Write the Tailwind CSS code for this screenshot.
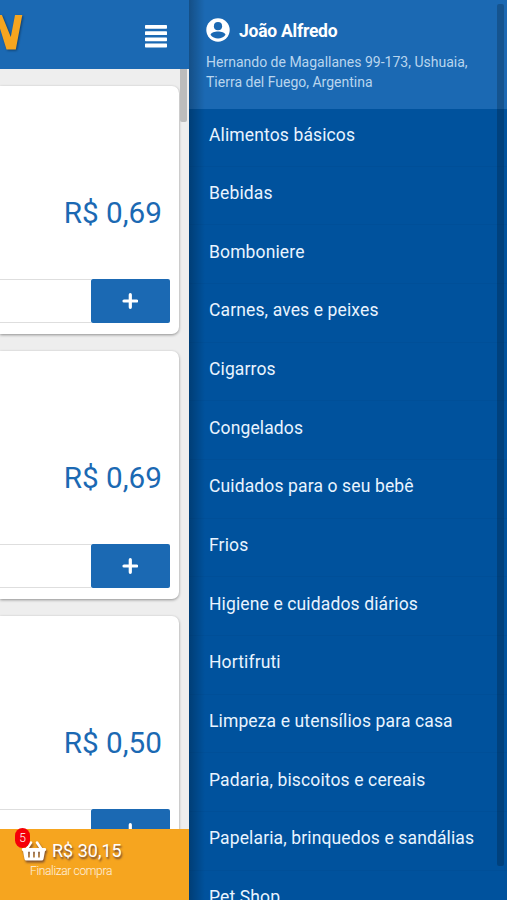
<!DOCTYPE html>
<html lang="pt-BR">
<head>
<meta charset="utf-8">
<title>Loja</title>
<script src="https://cdn.jsdelivr.net/npm/@tailwindcss/browser@4"></script>
</head>
<body class="font-[Roboto,sans-serif]">
<div class="flex h-[900px] w-[507px] overflow-hidden">
  <div class="relative flex h-full w-[189px] shrink-0 flex-col overflow-hidden bg-[#eeeeee]">
    <header class="flex h-[69px] shrink-0 items-center justify-between bg-[#1b69b3] pr-[22px]">
      <svg class="h-[40px] w-[30px]" viewBox="0 0 30 40" style="filter:drop-shadow(1px 1px 1px rgba(0,0,0,.4))"><path fill="#f6a51f" d="M-4 -1L1.500 -1L10.800 22L15.200 -1H22.500L15.800 34.500H6.500L0 13.500L-6 34Z"/></svg>
      <svg class="mt-[3px] h-[24px] w-[22px]" viewBox="0 0 22 24" fill="#fff"><rect y="1" width="22" height="3.800" rx=".7"/><rect y="7.300" width="22" height="3.800" rx=".7"/><rect y="13.500" width="22" height="3.800" rx=".7"/><rect y="19.600" width="22" height="3.800" rx=".7"/></svg>
    </header>
    <main class="flex flex-1 flex-col gap-[17px] overflow-hidden pt-[17.4px] pr-[10px]">
      <section class="flex h-[248px] shrink-0 flex-col rounded-r-[7px] bg-white shadow-[0_1px_3px_rgba(0,0,0,0.4)]">
        <p class="mt-[109px] h-[36px] pr-[17px] text-right text-[29.7px] leading-[36px] text-[#1b69b3]">R$ 0,69</p>
        <div class="mt-[48px] flex h-[44px] pr-[9.5px]"><div class="flex-1 border-y border-[#dedede]"></div><button class="flex w-[78.5px] items-center justify-center rounded-[2px] bg-[#1b69b3]"><svg class="h-4 w-4" viewBox="0 0 16 16" stroke="#fff" stroke-width="3.200" stroke-linecap="round"><path d="M8.300 1.700V14.300M2 8H14.600"/></svg></button></div>
      </section>
      <section class="flex h-[248px] shrink-0 flex-col rounded-r-[7px] bg-white shadow-[0_1px_3px_rgba(0,0,0,0.4)]">
        <p class="mt-[109px] h-[36px] pr-[17px] text-right text-[29.7px] leading-[36px] text-[#1b69b3]">R$ 0,69</p>
        <div class="mt-[48px] flex h-[44px] pr-[9.5px]"><div class="flex-1 border-y border-[#dedede]"></div><button class="flex w-[78.5px] items-center justify-center rounded-[2px] bg-[#1b69b3]"><svg class="h-4 w-4" viewBox="0 0 16 16" stroke="#fff" stroke-width="3.200" stroke-linecap="round"><path d="M8.300 1.700V14.300M2 8H14.600"/></svg></button></div>
      </section>
      <section class="flex h-[248px] shrink-0 flex-col rounded-r-[7px] bg-white shadow-[0_1px_3px_rgba(0,0,0,0.4)]">
        <p class="mt-[109px] h-[36px] pr-[17px] text-right text-[29.7px] leading-[36px] text-[#1b69b3]">R$ 0,50</p>
        <div class="mt-[48px] flex h-[44px] pr-[9.5px]"><div class="flex-1 border-y border-[#dedede]"></div><button class="flex w-[78.5px] items-center justify-center rounded-[2px] bg-[#1b69b3]"><svg class="h-4 w-4" viewBox="0 0 16 16" stroke="#fff" stroke-width="3.200" stroke-linecap="round"><path d="M8.300 1.700V14.300M2 8H14.600"/></svg></button></div>
      </section>
    </main>
    <div class="absolute top-[69px] left-[180px] h-[53px] w-[7px] rounded-b-[2px] bg-[#bcbcbc]"></div>
    <footer class="relative h-[71px] shrink-0 bg-[#f6a51f] pt-[9px] pl-[21px] text-white">
      <div class="flex h-[25px] items-center gap-[5px]">
        <svg class="h-[22px] w-[26px]" viewBox="0 0 26 22" style="filter:drop-shadow(1px 2px 1px rgba(40,20,60,.6))"><path d="M5 10L10 2.500M21 10L16 2.500" stroke="#fff" stroke-width="2.600" stroke-linecap="round"/><path fill="#fff" fill-rule="evenodd" d="M1.500 8H24.500Q26 9.500 24.500 11H24L22.500 19Q22.200 20.500 20.700 20.500H5.300Q3.800 20.500 3.500 19L2 11H1.500Q0 9.500 1.500 8ZM7.200 11.800V17.600H8.800V11.800ZM12.200 11.800V17.600H13.800V11.800ZM17.200 11.800V17.600H18.800V11.800Z"/></svg>
        <span class="text-[18px] leading-[25px] [text-shadow:1px_2px_2px_rgba(40,20,60,0.65)]">R$ 30,15</span>
      </div>
      <p class="mt-px pl-[9px] text-[12px] leading-[14px] font-light tracking-[-0.35px] text-white/85">Finalizar compra</p>
      <span class="absolute top-[-1px] left-[15px] flex h-[20px] w-[15px] items-center justify-center rounded-full bg-[#f50008] text-[12px] font-light">5</span>
    </footer>
  </div>
  <aside class="relative flex h-full w-[318px] shrink-0 flex-col overflow-hidden bg-[#00529d]">
    <div class="h-[109px] shrink-0 bg-[#1b69b3] pt-[18px] pl-[17px]">
      <div class="flex h-[25px] items-center gap-[9px]">
        <svg class="mb-px h-[24px] w-[24px]" viewBox="0 0 24 24"><circle cx="12" cy="12" r="11.700" fill="#fff"/><circle cx="12" cy="8.200" r="4.100" fill="#1b69b3"/><path fill="#1b69b3" d="M4.500 16.800C6 12.500 18 12.500 19.500 16.800C16 21.800 8 21.800 4.500 16.800Z"/></svg>
        <span class="pt-[2px] text-[17.5px] leading-[25px] font-bold tracking-[-0.25px] text-white">João Alfredo</span>
      </div>
      <p class="mt-[8.5px] text-[14px] leading-[20.5px] whitespace-nowrap text-[#b9d5ee]">Hernando de Magallanes 99-173, Ushuaia,<br>Tierra del Fuego, Argentina</p>
    </div>
    <nav class="-mt-px text-[17.5px] leading-[24px] tracking-[0.13px] whitespace-nowrap text-[#e9f4ff] *:block *:h-[58.67px] *:border-b *:border-black/3 *:pt-[14.5px] *:pl-[20px]">
      <a>Alimentos básicos</a><a>Bebidas</a><a>Bomboniere</a><a>Carnes, aves e peixes</a><a>Cigarros</a><a>Congelados</a><a>Cuidados para o seu bebê</a><a>Frios</a><a>Higiene e cuidados diários</a><a>Hortifruti</a><a>Limpeza e utensílios para casa</a><a>Padaria, biscoitos e cereais</a><a>Papelaria, brinquedos e sandálias</a><a>Pet Shop</a>
    </nav>
    <div class="absolute inset-y-0 left-0 w-[16px] bg-linear-to-r from-black/25 to-transparent"></div>
    <div class="absolute top-[4px] left-[308px] h-[862px] w-[7px] rounded-[2px] bg-black/20"></div>
  </aside>
</div>
</body>
</html>
